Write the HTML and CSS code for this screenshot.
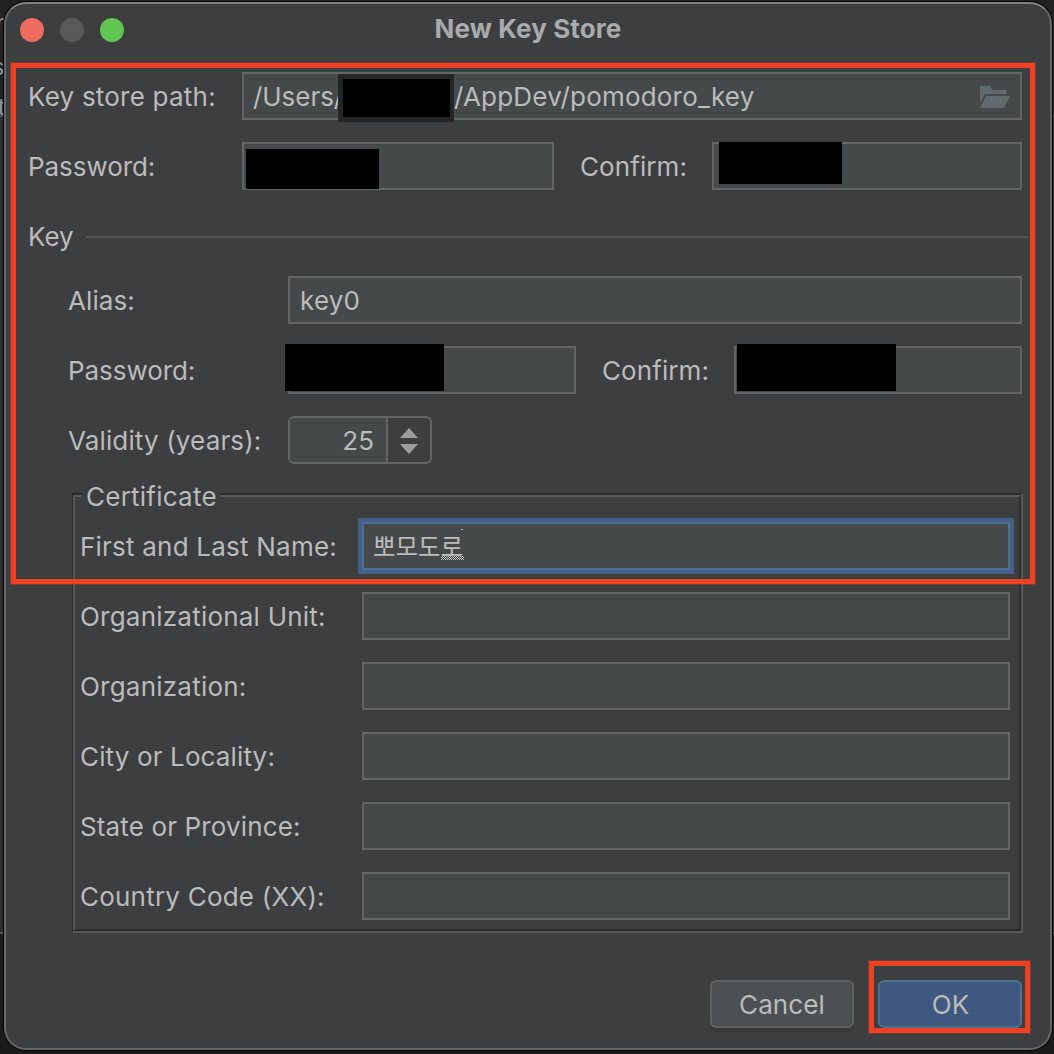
FILE: index.html
```html
<!DOCTYPE html>
<html lang="en">
<head>
<meta charset="utf-8">
<title>New Key Store</title>
<link rel="stylesheet" href="styles.css">
</head>
<body>
<div class="backdrop"><span class="code c1">r</span><span class="code c2">s</span><span class="code c3">t</span></div>
<main class="dialog">
  <header class="titlebar">
    <span class="light close"></span><span class="light minimize"></span><span class="light maximize"></span>
    <h1 class="title">New Key Store</h1>
  </header>
  <form class="form">
    <div class="row">
      <label class="label store-label">Key store path:</label>
      <div class="field grow path"><span class="t-users">/Users/</span><span class="t-app">/AppDev/pomodoro_key</span>
        <span class="mask mask-user"></span>
        <svg class="folder" width="30" height="22" viewBox="0 0 30 22"><path d="M0 0h10l2.5 4H26v4H5L0 17z"/><path d="M6 10h24l-6 12H0z"/></svg>
      </div>
    </div>
    <div class="row">
      <label class="label store-label t-pass">Password:</label>
      <div class="field store-pass"><span class="mask mask-store"></span></div>
      <label class="label confirm">Confirm:</label>
      <div class="field grow"><span class="mask mask-store-confirm"></span></div>
    </div>
    <div class="section"><span class="section-name">Key</span><span class="rule"></span></div>
    <div class="key-group">
      <div class="row">
        <label class="label key-label t-alias">Alias:</label>
        <div class="field grow">key0</div>
      </div>
      <div class="row">
        <label class="label key-label t-pass">Password:</label>
        <div class="field key-pass"><span class="mask mask-key"></span></div>
        <label class="label confirm">Confirm:</label>
        <div class="field grow"><span class="mask mask-key-confirm"></span></div>
      </div>
      <div class="row">
        <label class="label key-label t-valid">Validity (years):</label>
        <div class="spinner"><span class="years">25</span><span class="arrows">
          <svg width="18" height="26" viewBox="0 0 18 26"><path d="M9 0l9 10H0zM0 16h18l-9 10z"/></svg></span></div>
      </div>
    </div>
    <section class="certificate">
      <div class="cert-inner">
        <h2 class="legend">Certificate</h2>
        <div class="row"><label class="label cert-label">First and Last Name:</label><div class="field grow focused"><span class="korean">뽀모도로</span><span class="composing"></span><span class="tick"></span></div></div>
        <div class="row"><label class="label cert-label">Organizational Unit:</label><div class="field grow"></div></div>
        <div class="row"><label class="label cert-label">Organization:</label><div class="field grow"></div></div>
        <div class="row"><label class="label cert-label t-city">City or Locality:</label><div class="field grow"></div></div>
        <div class="row"><label class="label cert-label t-state">State or Province:</label><div class="field grow"></div></div>
        <div class="row"><label class="label cert-label">Country Code (XX):</label><div class="field grow"></div></div>
      </div>
    </section>
    <footer class="actions">
      <button type="button" class="button cancel">Cancel</button>
      <button type="button" class="button ok">OK</button>
    </footer>
  </form>
</main>
<div class="highlight highlight-form"></div>
<div class="highlight highlight-ok"></div>
</body>
</html>
```
FILE: styles.css
```css
* { box-sizing: border-box; }
html, body { height: 100%; }
body {
  margin: 0;
  padding: 2px 2px 4px 4px;
  position: relative;
  overflow: hidden;
  background: #1f1f1f;
  font-family: Inter, "Noto Sans CJK KR", sans-serif;
  font-size: 26px;
  color: #bbbbbb;
}
.backdrop {
  position: absolute;
  inset: 0;
  background: linear-gradient(#222 0 115px, #505050 115px 117px, #2b2b2b 117px 932px, #555 932px 934px, #1b1b1b 934px);
}
.code { position: absolute; width: 4px; height: 30px; overflow: hidden; color: #8796a5; font: 24px/30px "Liberation Sans", sans-serif; text-indent: -4px; }
.c1 { top: 8px; }
.c2 { top: 52px; text-indent: -8px; }
.c3 { top: 92px; text-indent: -2px; }
.dialog {
  position: relative;
  height: 1048px;
  border: 2px solid #666768;
  border-top-color: #838485;
  border-radius: 22px;
  background: #3d3e40;
  box-shadow: 0 0 0 1px #050505;
}
.titlebar { position: relative; display: flex; gap: 16px; height: 52px; padding: 14px 14px 0; }
.light { width: 24px; height: 24px; border-radius: 50%; }
.close { background: #ed6b5f; }
.minimize { background: #58595b; }
.maximize { background: #61c554; }
.title { position: absolute; inset: 0; margin: 0; text-align: center; font-size: 26px; line-height: 50px; font-weight: 700; color: #a9aaab; letter-spacing: .12px; }
.form { padding: 16px 28px 0 22px; }
.row { display: flex; height: 48px; }
.row + .row { margin-top: 22px; }
.label { line-height: 50px; white-space: nowrap; letter-spacing: .22px; }
.store-label { width: 214px; }
.key-label { width: 220px; }
.cert-label { width: 282px; }
.confirm { width: 158px; padding-left: 26px; letter-spacing: .08px; }
.t-pass { letter-spacing: -.06px; }
.t-alias { letter-spacing: .1px; }
.t-valid, .t-city, .t-state { letter-spacing: .14px; }
.field { position: relative; border: 2px solid #646566; background: #45494a; line-height: 46px; padding-left: 10px; white-space: nowrap; letter-spacing: .2px; }
.grow { flex: 1; }
.path { display: flex; padding-left: 9px; }
.t-users { width: 201px; letter-spacing: -.05px; }
.store-pass { width: 312px; }
.key-pass { width: 288px; }
.folder { position: absolute; right: 10px; top: 12px; fill: #616a6e; }
.mask { position: absolute; background: #000; }
.mask-user { left: 94px; top: 0; width: 116px; height: 48px; border: 5px solid #252525; border-right-width: 4px; }
.mask-store { left: 2px; top: 5px; width: 133px; height: 40px; }
.mask-store-confirm { left: 5px; top: -2px; width: 123px; height: 42px; }
.mask-key { left: -5px; top: -4px; width: 159px; height: 47px; }
.mask-key-confirm { left: 1px; top: -4px; width: 159px; height: 47px; }
.section { display: flex; align-items: center; height: 50px; margin: 22px -6px 14px 0; }
.section-name { width: 58px; padding-bottom: 2px; }
.rule { flex: 1; height: 2px; background: #515355; }
.key-group { padding-left: 40px; }
.spinner { display: flex; width: 144px; border: 2px solid #646566; border-radius: 6px; overflow: hidden; line-height: 46px; }
.years { width: 96px; padding-right: 12px; text-align: right; background: #45494a; }
.arrows { display: flex; flex: 1; align-items: center; justify-content: center; padding-top: 2px; border-left: 2px solid #646566; fill: #9c9da0; }
.certificate { margin: 29px -1px 0 44px; border: 2px solid #56585a; border-width: 2px 2px 2px 1px; border-top-color: #2b2c2d; border-left-color: #2b2c2d; }
.cert-inner { position: relative; height: 436px; padding: 25px 9px 0 5px; border: 2px solid #56585a; border-right-color: #2b2c2d; border-bottom-color: #2b2c2d; }
.legend { position: absolute; left: 7px; top: -14px; height: 28px; width: 138px; margin: 0; padding-left: 4px; background: #3d3e40; font-size: 26px; line-height: 28px; font-weight: 400; letter-spacing: .24px; }
.focused { border-color: #4b6e94; outline: 4px solid #466085; border-radius: 0; }
.korean { display: block; margin: -1px 0 0 -1px; font-family: "Noto Sans CJK KR", sans-serif; font-size: 24.5px; font-weight: 400; letter-spacing: 0; }
.composing { position: absolute; left: 77px; top: 32px; width: 23px; height: 4px; background: conic-gradient(#bbb 25%, transparent 0 50%, #bbb 0 75%, transparent 0) 0 0 / 2px 2px; }
.tick { position: absolute; left: 97px; top: 5px; width: 2px; height: 1px; background: #bbb; }
.actions { display: flex; justify-content: flex-end; gap: 24px; margin-top: 47px; }
.button { width: 144px; height: 48px; padding: 2px 0 0; border: 2px solid #5e6162; border-radius: 6px; background: #4c5052; color: #bbb; font: 26px/42px Inter, sans-serif; letter-spacing: .1px; box-shadow: 0 4px 0 #37383a; }
.ok { padding-left: 1px; background: #3f587f; border-color: #4c708c; box-shadow: none; }
.highlight { position: absolute; border: 5px solid #ee4023; box-shadow: 0 0 0 1px #ee402355; }
.highlight-form { left: 11px; top: 63px; width: 1024px; height: 521px; }
.highlight-ok { left: 869px; top: 961px; width: 161px; height: 72px; }
```
